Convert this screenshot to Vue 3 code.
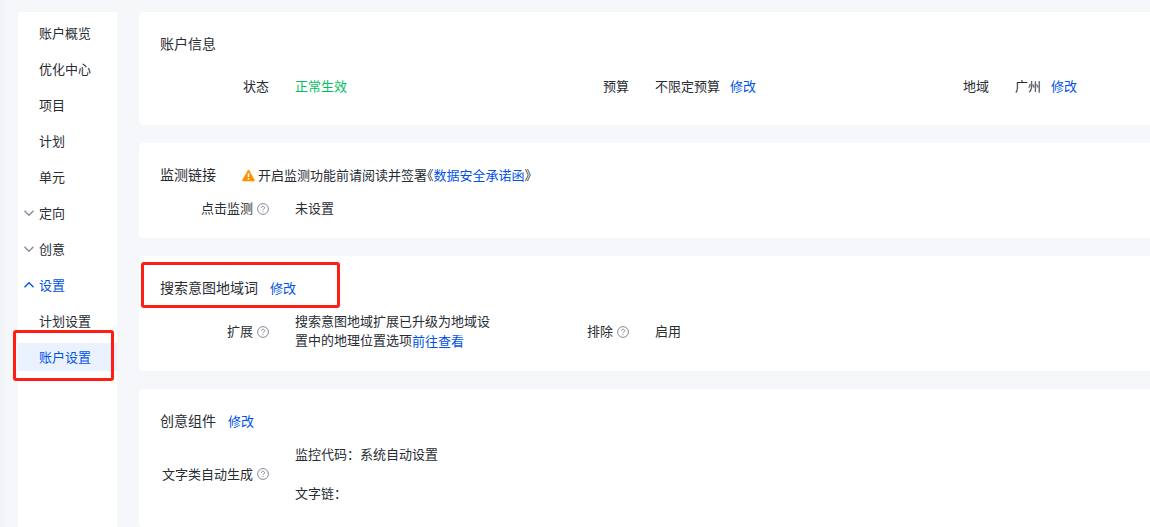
<script setup>
import { ref } from 'vue'

const current = ref('账户设置')
const open = ref({ 定向: false, 创意: false, 设置: true })

const nav = [
  { label: '账户概览' },
  { label: '优化中心' },
  { label: '项目' },
  { label: '计划' },
  { label: '单元' },
  { label: '定向', group: true },
  { label: '创意', group: true },
  { label: '设置', group: true, children: ['计划设置', '账户设置'] },
]

const cards = [
  {
    title: '账户信息',
    roomy: true,
    fields: [
      { label: '状态', lines: [{ text: '正常生效', ok: true }] },
      { label: '预算', lines: [{ text: '不限定预算', action: '修改' }] },
      { label: '地域', lines: [{ text: '广州', action: '修改' }] },
    ],
  },
  {
    title: '监测链接',
    notice: true,
    fields: [{ label: '点击监测', help: true, lines: [{ text: '未设置' }] }],
  },
  {
    title: '搜索意图地域词',
    action: '修改',
    marked: true,
    fields: [
      {
        label: '扩展',
        help: true,
        lines: [{ text: '搜索意图地域扩展已升级为地域设置中的地理位置选项', link: '前往查看' }],
      },
      { label: '排除', help: true, lines: [{ text: '启用' }] },
    ],
  },
  {
    title: '创意组件',
    action: '修改',
    fields: [
      {
        label: '文字类自动生成',
        help: true,
        lines: [{ text: '监控代码：系统自动设置' }, { text: '文字链：' }],
      },
    ],
  },
]
</script>

<template>
  <div class="page">
    <nav class="sidebar" aria-label="账户导航">
      <template v-for="item in nav" :key="item.label">
        <button
          v-if="item.group"
          type="button"
          class="nav-item"
          :class="{ expanded: open[item.label] }"
          :aria-expanded="open[item.label]"
          @click="open[item.label] = !open[item.label]"
        >
          <svg class="chevron" viewBox="0 0 12 12" aria-hidden="true">
            <path d="M1.5 3.8 6 8.3l4.500-4.500" />
          </svg>
          {{ item.label }}
        </button>
        <a v-else href="#" class="nav-item">{{ item.label }}</a>
        <template v-if="item.children && open[item.label]">
          <a
            v-for="child in item.children"
            :key="child"
            href="#"
            class="nav-item"
            :class="{ active: child === current }"
            @click.prevent="current = child"
          >
            {{ child }}
            <span v-if="child === '账户设置'" class="mark mark-nav"></span>
          </a>
        </template>
      </template>
    </nav>

    <main class="content">
      <section v-for="card in cards" :key="card.title" class="card">
        <header class="card-head">
          <h2>{{ card.title }}</h2>
          <button v-if="card.action" type="button" class="link">{{ card.action }}</button>
          <p v-if="card.notice" class="notice">
            <svg class="warn" viewBox="0 0 12 12" aria-hidden="true">
              <path class="warn-body" d="M6 1.600 11 10.500H1Z" />
              <path class="warn-mark" d="M6 4v3.300M6 8.300v1.300" />
            </svg>
            <span>开启监测功能前请阅读并签署<span class="bracket">《</span><a href="#">数据安全承诺函</a><span class="bracket">》</span></span>
          </p>
          <span v-if="card.marked" class="mark mark-head"></span>
        </header>
        <dl class="fields" :class="{ roomy: card.roomy }">
          <div v-for="field in card.fields" :key="field.label" class="field">
            <dt>
              {{ field.label }}
              <button v-if="field.help" type="button" class="help" :aria-label="field.label + '说明'">
                <svg viewBox="0 0 12 12" aria-hidden="true">
                  <circle cx="6" cy="6" r="5.400" />
                  <path d="M4.400 4.800a1.600 1.500 0 1 1 2.500 1.200c-.6.400-.9.600-.9 1.200M6 8.200v1" />
                </svg>
              </button>
            </dt>
            <dd>
              <div v-for="line in field.lines" :key="line.text" class="line">
                <span :class="{ ok: line.ok }">{{ line.text }}</span
                ><a v-if="line.link" href="#" class="more">{{ line.link }}</a
                ><button v-if="line.action" type="button" class="link">{{ line.action }}</button>
              </div>
            </dd>
          </div>
        </dl>
      </section>
    </main>
  </div>
</template>

<style>
body {
  margin: 0;
  background: #f6f7fb;
}
</style>

<style scoped>
.page {
  box-sizing: border-box;
  display: flex;
  gap: 22px;
  min-height: 100vh;
  padding: 12px 0 0 18px;
  background: linear-gradient(90deg, #f1f2f6, #f6f7fb 8px);
  color: #282c33;
  font: 13px/19px "Liberation Sans", "Noto Sans CJK SC", sans-serif;
}

button {
  padding: 0;
  border: 0;
  background: none;
  color: inherit;
  font: inherit;
  cursor: pointer;
}

a,
.link {
  color: #0052e6;
  text-decoration: none;
}

.sidebar {
  display: flex;
  flex: 0 0 99px;
  flex-direction: column;
  gap: 8px;
  padding-top: 7px;
  background: #fff;
}

.nav-item {
  position: relative;
  display: flex;
  align-items: center;
  height: 28px;
  padding-left: 21px;
  color: #282c33;
  white-space: nowrap;
}

button.nav-item {
  gap: 4px;
  padding-left: 5px;
}

.nav-item.expanded,
.nav-item.active {
  color: #0052e6;
}

.nav-item.active {
  background: #ebf2ff;
}

.chevron {
  width: 12px;
  height: 12px;
  fill: none;
  stroke: #858b99;
  stroke-width: 1.3;
}

.expanded .chevron {
  stroke: #0052e6;
  transform: rotate(180deg);
}

.content {
  display: flex;
  flex: 1;
  flex-direction: column;
  gap: 18px;
  min-width: 0;
}

.card {
  padding: 22px 0 20px 21px;
  border-radius: 4px 0 0 4px;
  background: #fff;
}

.card:last-child {
  flex: 1;
}

.card-head {
  position: relative;
  display: flex;
  align-items: center;
  gap: 12px;
  height: 20px;
}

h2 {
  margin: 0;
  font-size: 14px;
  font-weight: 400;
  line-height: 20px;
}

.notice {
  display: flex;
  align-items: center;
  gap: 3px;
  margin: 0 0 0 14px;
}

.bracket {
  font-feature-settings: "halt";
}

.warn {
  width: 13px;
  height: 13px;
}

.warn-body {
  fill: #ff9100;
  stroke: #ff9100;
  stroke-width: 1.6;
  stroke-linejoin: round;
}

.warn-mark {
  fill: none;
  stroke: #fff;
  stroke-width: 1.4;
}

.fields {
  display: grid;
  grid-template-columns: 4fr 4fr 3fr;
  margin: 14px 0 0;
}

.fields.roomy {
  padding: 9px 0;
}

.field {
  display: flex;
  align-items: center;
  gap: 26px;
}

dt {
  display: flex;
  flex: 0 0 109px;
  align-items: center;
  justify-content: flex-end;
  gap: 4px;
  white-space: nowrap;
}

dd {
  display: flex;
  flex-direction: column;
  gap: 20px;
  max-width: 198px;
  margin: 0;
}

.line .link {
  margin-left: 10px;
}

.ok {
  color: #00bf5c;
}

.more {
  vertical-align: -1px;
}

.help {
  display: flex;
}

.help svg {
  width: 12px;
  height: 12px;
  fill: none;
  stroke: #858b99;
}

.mark {
  position: absolute;
  box-sizing: border-box;
  border: 3px solid #ff1e14;
  border-radius: 3px;
  pointer-events: none;
}

.mark-nav {
  inset: -13px 3px -10px -5px;
}

.mark-head {
  top: -16px;
  left: -19px;
  width: 199px;
  height: 46px;
}
</style>
